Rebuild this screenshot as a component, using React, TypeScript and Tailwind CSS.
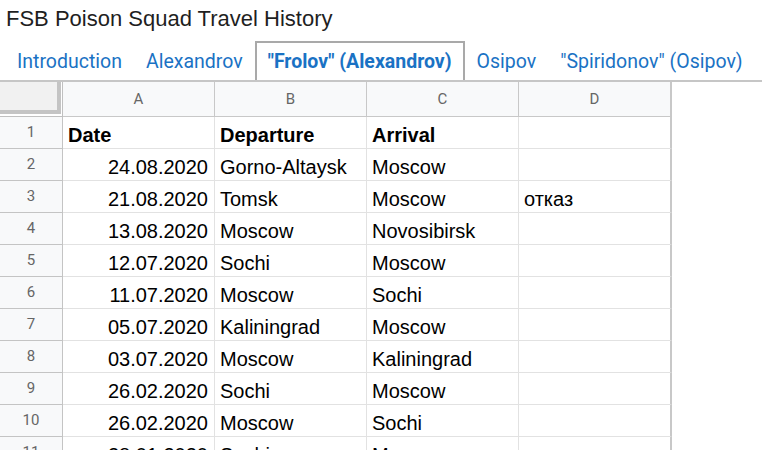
import React from "react";

const rows: [string, string, string, string][] = [
  ["Date", "Departure", "Arrival", ""],
  ["24.08.2020", "Gorno-Altaysk", "Moscow", ""],
  ["21.08.2020", "Tomsk", "Moscow", "отказ"],
  ["13.08.2020", "Moscow", "Novosibirsk", ""],
  ["12.07.2020", "Sochi", "Moscow", ""],
  ["11.07.2020", "Moscow", "Sochi", ""],
  ["05.07.2020", "Kaliningrad", "Moscow", ""],
  ["03.07.2020", "Moscow", "Kaliningrad", ""],
  ["26.02.2020", "Sochi", "Moscow", ""],
  ["26.02.2020", "Moscow", "Sochi", ""],
  ["28.01.2020", "Sochi", "Moscow", ""],
];

const tabs = [
  { label: "Introduction", active: false },
  { label: "Alexandrov", active: false },
  { label: '"Frolov" (Alexandrov)', active: true },
  { label: "Osipov", active: false },
  { label: '"Spiridonov" (Osipov)', active: false },
];

export default function App() {
  return (
    <div className="w-[762px] h-[450px] overflow-hidden bg-white" style={{ fontFamily: '"Liberation Sans", Arial, sans-serif' }}>
      <div className="h-[41px] pl-[6px] pt-[6px] text-[22px] leading-[26px] text-[#1f1f1f]">
        FSB Poison Squad Travel History
      </div>
      <div className="flex h-[39px] pl-[5px] text-[19.5px] text-[#1a72c4]" style={{ fontFamily: 'Roboto, "Liberation Sans", sans-serif' }}>
        {tabs.map((t) =>
          t.active ? (
            <div key={t.label} className="flex items-center px-[11px] pt-[1px] border-2 border-b-0 border-[#a9a9a9] font-bold whitespace-nowrap">
              {t.label}
            </div>
          ) : (
            <div key={t.label} className="flex items-center px-3 pt-[3px] whitespace-nowrap">
              {t.label}
            </div>
          )
        )}
      </div>
      <div className="border-t-2 border-[#c6c6c6]">
        <div className="flex h-[35px]">
          <div className="w-[63px] h-[35px] border-r border-b border-[#c0c0c0] bg-white">
            <div className="w-[61px] h-[32px] bg-[#f1f1f1] border-r-4 border-b-4 border-[#c4c4c4]" />
          </div>
          {["A", "B", "C", "D"].map((c, i) => (
            <div
              key={c}
              className={`${i === 3 ? "w-[153px] border-r-2 border-[#c8c8c8]" : "w-[152px] border-r border-[#c8c8c8]"} h-[35px] border-b bg-[#f8f9fa] flex items-center justify-center text-[15px] text-[#666666]`}
              style={{ fontFamily: 'Roboto, "Liberation Sans", sans-serif' }}
            >
              {c}
            </div>
          ))}
        </div>
        {rows.map((r, ri) => (
          <div key={ri} className="flex h-[32px]">
            <div
              className="w-[63px] h-[32px] border-r border-b border-[#c4c4c4] bg-[#f8f9fa] flex items-center justify-center text-[15px] text-[#666666]"
              style={{ fontFamily: 'Roboto, "Liberation Sans", sans-serif' }}
            >
              {ri + 1}
            </div>
            {r.map((v, ci) => (
              <div
                key={ci}
                className={`${ci === 3 ? "w-[153px] border-r-2 border-r-[#c8c8c8]" : "w-[152px] border-r border-r-[#e2e2e2]"} h-[32px] border-b border-b-[#e2e2e2] flex items-end pb-[1px] text-[20px] leading-[24px] text-black whitespace-nowrap overflow-hidden ${
                  ri === 0 ? "font-bold" : ""
                } ${ci === 0 && ri > 0 ? "justify-end pr-[6px]" : "pl-[5px]"}`}
              >
                {v}
              </div>
            ))}
          </div>
        ))}
      </div>
    </div>
  );
}
